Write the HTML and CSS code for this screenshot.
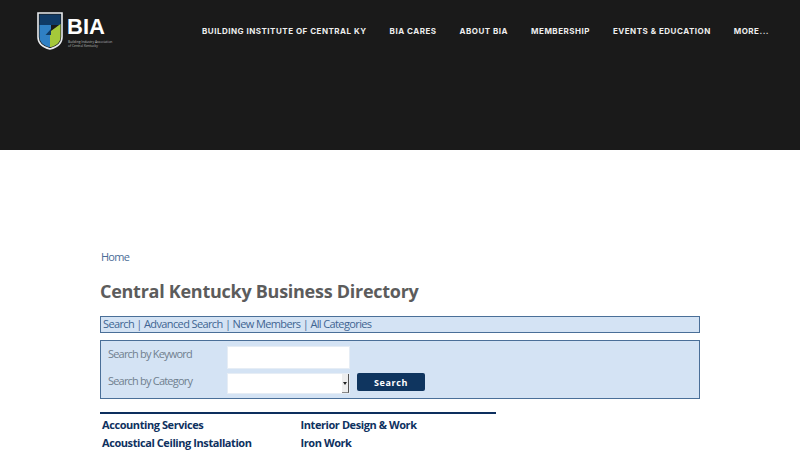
FILE: index.html
```html
<!DOCTYPE html>
<html lang="en">
<head>
    <meta charset="UTF-8">
    <title>Central Kentucky Business Directory</title>
    <link rel="stylesheet" href="styles.css">
</head>
<body>
    <!-- Header -->
    <header class="site-header">
        <div class="logo">
            <svg class="logo-shield" width="26" height="38" viewBox="0 0 26 38">
                <path d="M1 1H25V25C25 32 19 35.500 13 37C7 35.500 1 32 1 25Z" fill="#1a1a1a" stroke="#e8ecef" stroke-width="1.600"/>
                <path d="M2.500 2.500H23.500V13H2.500Z" fill="#0f3a66"/>
                <path d="M2.500 13H14V30L13 35.200C7.500 34 2.500 31 2.500 25Z" fill="#2f80c4"/>
                <path d="M23.500 12V25C23.500 31 18.500 34 13 35.200V23H8.500Z" fill="#a5c93a"/>
                <path d="M8.500 23L14 17V23Z" fill="#0f3a66"/>
            </svg>
            <div class="logo-text">
                <div class="logo-name">BIA</div>
                <div class="logo-sub">Building Industry Association<br>of Central Kentucky</div>
            </div>
        </div>
        <nav class="main-nav">
            <a href="#">Building Institute of Central KY</a>
            <a href="#">BIA Cares</a>
            <a href="#">About BIA</a>
            <a href="#">Membership</a>
            <a href="#">Events &amp; Education</a>
            <a href="#">More...</a>
        </nav>
    </header>

    <main class="content">
        <a class="breadcrumb" href="#">Home</a>
        <h1>Central Kentucky Business Directory</h1>

        <!-- Links do diretorio -->
        <div class="dir-links">
            <a href="#">Search</a> | <a href="#">Advanced Search</a> | <a href="#">New Members</a> | <a href="#">All Categories</a>
        </div>

        <!-- Busca -->
        <form class="search-box">
            <div class="search-row">
                <label for="keyword">Search by Keyword</label>
                <input type="text" id="keyword">
            </div>
            <div class="search-row">
                <label for="category">Search by Category</label>
                <div class="fake-select" id="category">
                    <span class="select-arrow"></span>
                </div>
                <button type="button">Search</button>
            </div>
        </form>

        <!-- Categorias -->
        <div class="categories">
            <a href="#">Accounting Services</a>
            <a href="#">Interior Design &amp; Work</a>
            <a href="#">Acoustical Ceiling Installation</a>
            <a href="#">Iron Work</a>
        </div>
    </main>
</body>
</html>
```

FILE: styles.css
```css
html, body {
    height: 450px;
    overflow: hidden;
}

body {
    margin: 0;
    padding: 0;
    background-color: #fff;
    font-family: "Open Sans", Arial, sans-serif;
}

a {
    text-decoration: none;
}

/* Header */
.site-header {
    height: 150px;
    box-sizing: border-box;
    padding: 12px 31px 0 37px;
    background-color: #1a1a1a;
    display: flex;
    justify-content: space-between;
    align-items: flex-start;
}

.logo {
    display: flex;
    flex-shrink: 0;
    gap: 4px;
}

.logo-shield {
    display: block;
}

.logo-name {
    margin-top: 5px;
    font-family: "Liberation Sans", Arial, sans-serif;
    font-size: 22px;
    font-weight: bold;
    line-height: 20px;
    color: #fff;
}

.logo-sub {
    margin-top: 3px;
    margin-left: 1px;
    font-size: 3.300px;
    line-height: 4px;
    white-space: nowrap;
    color: #b9b9b9;
}

.main-nav {
    display: flex;
    gap: 23px;
    margin-top: 13px;
}

.main-nav a {
    font-family: Inter, Arial, sans-serif;
    font-size: 8px;
    font-weight: 700;
    line-height: 13px;
    letter-spacing: 0.5px;
    text-transform: uppercase;
    white-space: nowrap;
    color: #eeeeee;
}

/* Conteudo */
.content {
    width: 600px;
    margin-left: 100px;
    padding-top: 99px;
}

.breadcrumb {
    display: block;
    margin-left: 1px;
    font-size: 11px;
    line-height: 15px;
    letter-spacing: -0.75px;
    color: #4b6d97;
}

h1 {
    margin: 14px 0 11px;
    font-size: 18px;
    font-weight: 700;
    line-height: 27px;
    letter-spacing: -0.27px;
    color: #5c5c5c;
}

.dir-links {
    height: 17px;
    box-sizing: border-box;
    padding-left: 2px;
    border: 1px solid #4a6f98;
    background-color: #d4e3f4;
    font-size: 11px;
    line-height: 13px;
    letter-spacing: -0.62px;
    color: #4b6d97;
}

.dir-links a {
    color: #3f6592;
}

/* Busca */
.search-box {
    margin-top: 7px;
    height: 59px;
    box-sizing: border-box;
    padding: 5px 6px 0;
    border: 1px solid #4a6f98;
    background-color: #d4e3f4;
    display: flex;
    flex-direction: column;
    gap: 4px;
}

.search-row {
    display: flex;
    align-items: flex-start;
}

.search-row label {
    width: 119px;
    padding-left: 1px;
    font-size: 11px;
    line-height: 15px;
    letter-spacing: -0.8px;
    color: #70808f;
}

.search-row input {
    width: 123px;
    height: 23px;
    box-sizing: border-box;
    padding: 0;
    border: 1px solid #e6edf5;
    background-color: #fff;
}

.fake-select {
    width: 123px;
    height: 21px;
    box-sizing: border-box;
    border: 1px solid #e6edf5;
    background-color: #fff;
    display: flex;
    justify-content: flex-end;
}

.select-arrow {
    width: 6px;
    background-color: #eeeeee;
    border-right: 1px solid #555;
    border-bottom: 1px solid #888;
    display: flex;
    align-items: center;
    justify-content: center;
}

.select-arrow::before {
    content: "";
    border-top: 3px solid #222;
    border-left: 2px solid transparent;
    border-right: 2px solid transparent;
}

.search-row button {
    width: 68px;
    height: 18px;
    margin-left: 7px;
    padding: 0;
    border: none;
    border-radius: 2px;
    background-color: #0f355f;
    font-family: "Open Sans", Arial, sans-serif;
    font-size: 9px;
    font-weight: 700;
    letter-spacing: 0.6px;
    color: #fff;
}

/* Categorias */
.categories {
    width: 396px;
    margin-top: 13px;
    border-top: 2px solid #0d2f5e;
    padding: 2px 0 0 2px;
    box-sizing: border-box;
    display: grid;
    grid-template-columns: 198.500px 1fr;
}

.categories a {
    font-size: 11px;
    font-weight: 700;
    line-height: 18px;
    letter-spacing: -0.42px;
    color: #0e3160;
}
```
